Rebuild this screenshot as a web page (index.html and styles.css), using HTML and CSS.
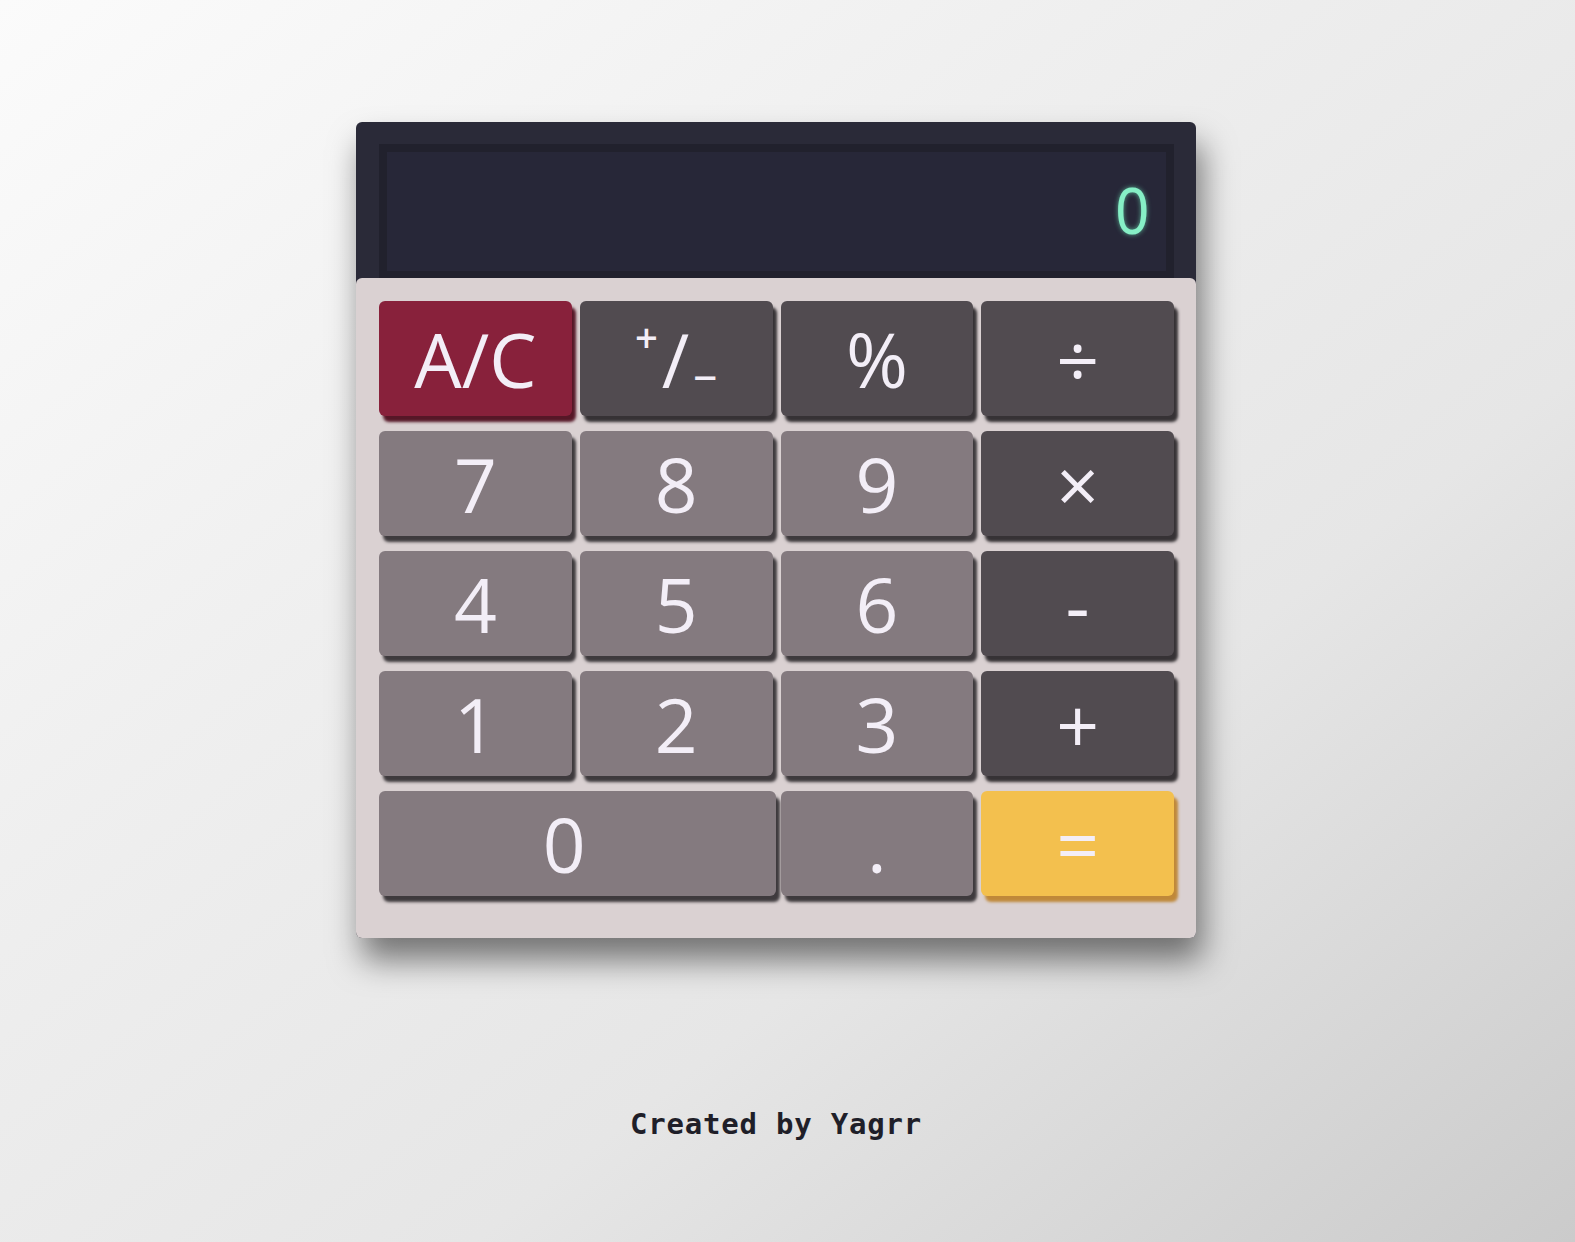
FILE: index.html
```html
<!DOCTYPE html>
<html lang="en">
<head>
<meta charset="utf-8">
<title>Calculator</title>
<link rel="stylesheet" href="styles.css">
</head>
<body>
<main class="page">
  <div class="calculator">
    <div class="display"><span class="display-value">0</span></div>
    <div class="keypad">
      <button class="key key-clear">A/C</button>
      <button class="key key-op"><sup class="sign-plus">+</sup>/<sub class="sign-minus">–</sub></button>
      <button class="key key-op">%</button>
      <button class="key key-op">÷</button>
      <button class="key key-num">7</button>
      <button class="key key-num">8</button>
      <button class="key key-num">9</button>
      <button class="key key-op">×</button>
      <button class="key key-num">4</button>
      <button class="key key-num">5</button>
      <button class="key key-num">6</button>
      <button class="key key-op">-</button>
      <button class="key key-num">1</button>
      <button class="key key-num">2</button>
      <button class="key key-num">3</button>
      <button class="key key-op">+</button>
      <button class="key key-num key-zero">0</button>
      <button class="key key-num">.</button>
      <button class="key key-equals">=</button>
    </div>
  </div>
  <footer class="credit">Created by Yagrr</footer>
</main>
</body>
</html>
```
FILE: styles.css
```css
html, body {
  margin: 0;
  padding: 0;
}
body {
  height: 1242px;
  overflow: hidden;
  background: linear-gradient(to bottom right, #fbfbfb 0%, #efefef 35%, #e6e6e6 65%, #cbcbcb 100%);
  font-family: "Open Sans", "Noto Sans", sans-serif;
}
.page {
  width: 1552px;
  display: flex;
  flex-direction: column;
  align-items: center;
  padding-top: 122px;
}
.calculator {
  width: 840px;
  background: #2a2a38;
  border-radius: 6px;
  padding: 22px 0 0 0;
  box-shadow: 6px 22px 32px rgba(0, 0, 0, 0.5);
}
.display {
  box-sizing: border-box;
  height: 134px;
  margin: 0 22px 0 23px;
  border: 8px solid #21212d;
  border-bottom-width: 7px;
  background: #272738;
  display: flex;
  align-items: center;
  justify-content: flex-end;
  padding-right: 17px;
}
.display-value {
  font-family: "Liberation Sans", "Arial", sans-serif;
  font-size: 66px;
  line-height: 1;
  color: #86efc6;
  text-shadow: 0 0 6px rgba(110, 230, 185, 0.7);
  display: inline-block;
  transform: scaleX(0.9);
  transform-origin: right center;
  margin-top: -2px;
}
.keypad {
  background: #dad1d2;
  border-radius: 6px;
  padding: 23px 22px 42px 23px;
  display: grid;
  grid-template-columns: repeat(4, 1fr);
  grid-template-rows: 115px repeat(4, 105px);
  column-gap: 8px;
  row-gap: 15px;
}
.key {
  border: none;
  border-radius: 6px;
  padding: 0;
  margin: 0;
  font-family: "Open Sans", "Noto Sans", sans-serif;
  font-size: 75px;
  color: #f3eef7;
  display: flex;
  align-items: center;
  justify-content: center;
  line-height: normal;
}
.key-num {
  background: #847a7f;
  box-shadow: 4px 6px 3px #3e3a3d;
}
.key-op {
  background: #514b50;
  box-shadow: 4px 6px 3px #363235;
}
.key-clear {
  background: #88213b;
  box-shadow: 4px 6px 3px #561727;
}
.key-equals {
  background: #f3c04e;
  box-shadow: 4px 6px 3px #bf8839;
}
.key-zero {
  grid-column: span 2;
  padding-right: 26px;
  margin-right: -3px;
}
.sign-plus {
  font-size: 40px;
  font-weight: 600;
  vertical-align: 0;
  position: relative;
  top: -22px;
  margin-right: 4px;
}
.sign-minus {
  font-size: 48px;
  vertical-align: 0;
  position: relative;
  top: 14px;
  margin-left: 4px;
}
.credit {
  margin-top: 169px;
  font-family: "DejaVu Sans Mono", monospace;
  font-weight: bold;
  font-size: 29px;
  letter-spacing: 0.8px;
  color: #1f1f29;
}
```
